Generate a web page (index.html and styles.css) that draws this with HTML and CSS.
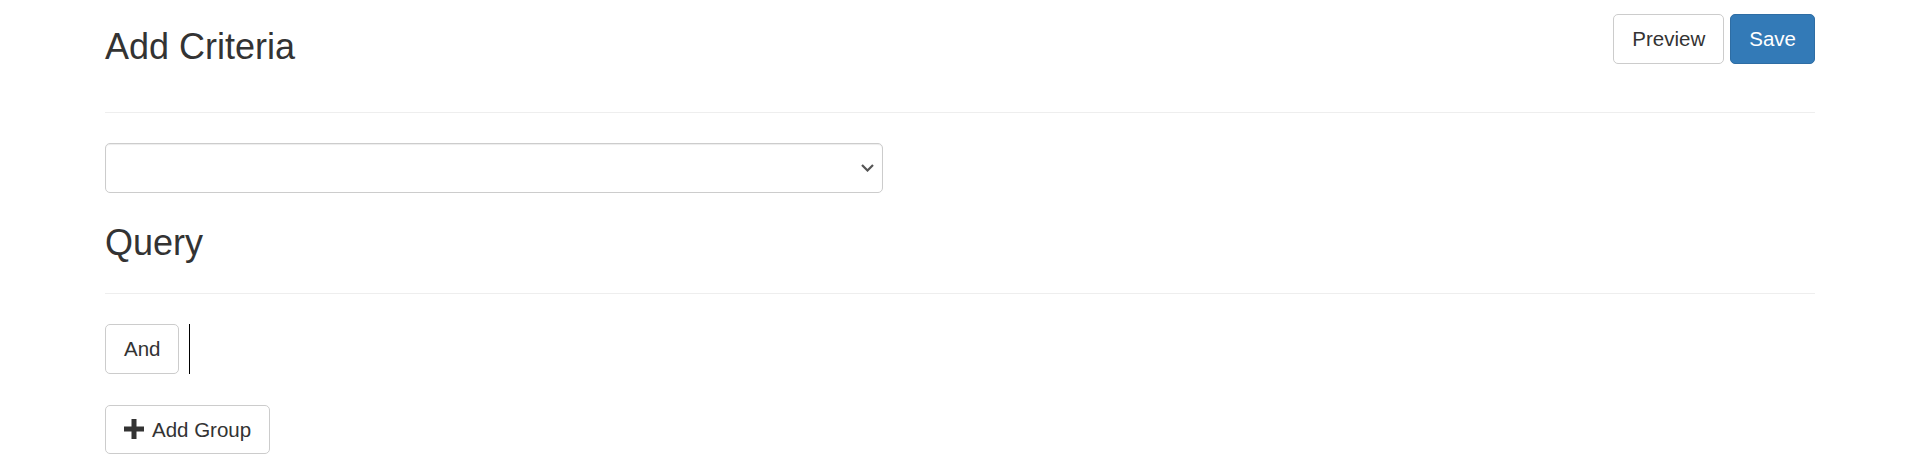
FILE: index.html
```html
<!DOCTYPE html>
<html lang="en">
<head>
  <meta charset="UTF-8" />
  <title>Add Criteria</title>
  <meta name="viewport" content="width=device-width, initial-scale=1" />
  <link rel="stylesheet" href="styles.css">
</head>
<body>
  <div class="container">
    <div class="page-header">
      <h1>Add Criteria</h1>
      <div class="actions">
        <button class="btn">Preview</button>
        <button class="btn btn-primary">Save</button>
      </div>
    </div>
    <hr />

    <div class="select-wrap">
      <select class="field-select">
        <option></option>
      </select>
      <svg class="caret" width="13" height="8" viewBox="0 0 13 8"><path d="M1 1l5.5 5.5L12 1" fill="none" stroke="#555" stroke-width="2.2"/></svg>
    </div>

    <h2>Query</h2>
    <hr />

    <div class="group">
      <button class="btn">And</button>
      <div class="rules"></div>
    </div>

    <button class="btn btn-add">
      <svg class="icon" width="20" height="20" viewBox="0 0 20 20"><path d="M7.5 0h5v7.5H20v5h-7.5V20h-5v-7.5H0v-5h7.5z" fill="#333"/></svg>
      Add Group
    </button>
  </div>
</body>
</html>
```

FILE: styles.css
```css
body { font-family: "Liberation Sans", Arial, sans-serif; margin: 0; background: #fff; color: #333; }
.container { width: 1710px; margin: 0 auto; }
.page-header { display: flex; justify-content: space-between; align-items: flex-start; padding-top: 14px; }
h1, h2 { font-size: 36px; font-weight: normal; line-height: 40px; margin: 0; }
h1 { margin-top: 13px; }
h2 { margin-top: 30px; }
hr { border: 0; border-top: 1px solid #eee; margin: 0; }
.page-header + hr { margin-top: 45px; margin-bottom: 30px; }
h2 + hr { margin-top: 30px; margin-bottom: 30px; }
.actions { display: flex; gap: 6px; }
.btn { font-family: inherit; font-size: 20.5px; line-height: 29.5px; padding: 9px 18px; color: #333; background: #fff; border: 1px solid #ccc; border-radius: 5px; cursor: pointer; display: inline-flex; align-items: center; }
.btn-primary { background: #337ab7; border-color: #2e6da4; color: #fff; }
.select-wrap { position: relative; width: 778px; }
.field-select { display: block; width: 100%; height: 50px; padding: 8px 16px; font-family: inherit; font-size: 20px; color: #555; background: #fff; border: 1px solid #ccc; border-radius: 5px; box-shadow: inset 0 1px 1px rgba(0,0,0,0.075); -webkit-appearance: none; appearance: none; }
.caret { position: absolute; right: 9px; top: 21px; pointer-events: none; }
.group { display: flex; align-items: stretch; gap: 10px; }
.rules { border-left: 1px solid #000; }
.btn-add { margin-top: 31px; gap: 8px; }
.icon { display: block; }
```
